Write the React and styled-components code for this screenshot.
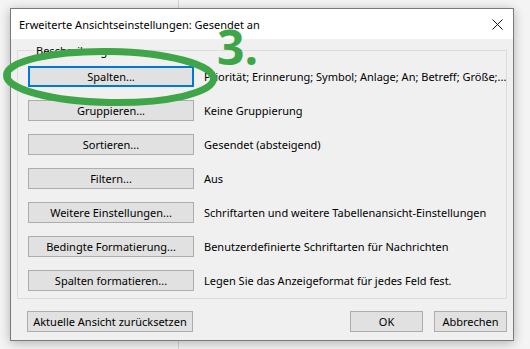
import React from 'react'
import styled, { createGlobalStyle } from 'styled-components'

const GlobalStyle = createGlobalStyle`
  html, body {
    margin: 0;
    padding: 0;
    width: 530px;
    height: 349px;
    overflow: hidden;
  }
  body {
    background: #f4f4f4 linear-gradient(90deg, transparent 178px, #d6d6d6 178px, #d6d6d6 179px, transparent 179px);
    font-family: "Segoe UI", "Noto Sans", sans-serif;
    font-size: 11px;
    color: #000;
  }
`;

const Stage = styled.div`
  padding: 8px 0 0 10px;
`;

const Dialog = styled.div`
  position: relative;
  width: 502px;
  height: 331px;
  border: 1px solid #7a7a7a;
  background: #f0f0f0;
  box-shadow: 0 2px 10px rgba(0, 0, 0, 0.28);
  display: flex;
  flex-direction: column;
`;

const TitleBar = styled.div`
  height: 29px;
  background: #fff;
  display: flex;
  align-items: center;
  justify-content: space-between;
  padding: 1px 8px 0 8px;
`;

const Title = styled.span`
  font-size: 11px;
  line-height: 1;
`;

const Close = styled.svg`
  width: 11px;
  height: 11px;
  margin-right: 2px;
`;

const Body = styled.div`
  flex: 1;
  display: flex;
  flex-direction: column;
  padding: 4px 6px 8px 6px;
`;

const Group = styled.fieldset`
  margin: 0;
  padding: 8px 0 7px 10px;
  border: 1px solid #dcdcdc;
  display: grid;
  grid-template-columns: 166px auto;
  column-gap: 10px;
  row-gap: 13px;
  align-items: center;
`;

const Legend = styled.legend`
  padding: 0 2px;
  margin-left: 6px;
  font-size: 11px;
`;

const Button = styled.div`
  box-sizing: border-box;
  height: 21px;
  width: ${p => p.$w || 166}px;
  background: #e1e1e1;
  border: 1px solid ${p => (p.$focused ? '#0078d7' : '#adadad')};
  box-shadow: ${p => (p.$focused ? 'inset 0 0 0 1px #0078d7' : 'none')};
  display: flex;
  align-items: center;
  justify-content: center;
  font-size: 11px;
  white-space: nowrap;
`;

const Desc = styled.span`
  font-size: 11px;
  white-space: nowrap;
`;

const Footer = styled.div`
  margin-top: auto;
  display: flex;
  align-items: center;
  padding-left: 10px;
  gap: 11px;
`;

const Spacer = styled.div`
  flex: 1;
`;

const Ring = styled.svg`
  position: absolute;
  left: -8px;
  top: 39px;
  width: 214px;
  height: 58px;
  overflow: visible;
  pointer-events: none;
`;

const Step = styled.span`
  position: absolute;
  left: 206px;
  top: 14px;
  font-family: "Open Sans", "Noto Sans", sans-serif;
  font-weight: 700;
  font-size: 48px;
  line-height: 1;
  color: #3ea548;
`;

const rows = [
  ['Spalten...', 'Priorität; Erinnerung; Symbol; Anlage; An; Betreff; Größe;...', true],
  ['Gruppieren...', 'Keine Gruppierung'],
  ['Sortieren...', 'Gesendet (absteigend)'],
  ['Filtern...', 'Aus'],
  ['Weitere Einstellungen...', 'Schriftarten und weitere Tabellenansicht-Einstellungen'],
  ['Bedingte Formatierung...', 'Benutzerdefinierte Schriftarten für Nachrichten'],
  ['Spalten formatieren...', 'Legen Sie das Anzeigeformat für jedes Feld fest.'],
]

export default function App() {
  return (
    <Stage>
      <GlobalStyle />
      <Dialog>
        <TitleBar>
          <Title>Erweiterte Ansichtseinstellungen: Gesendet an</Title>
          <Close viewBox="0 0 11 11">
            <path d="M0.5 0.5 L10.5 10.5 M10.5 0.5 L0.5 10.5" stroke="#111" strokeWidth="1" />
          </Close>
        </TitleBar>
        <Body>
          <Group>
            <Legend>Beschreibung</Legend>
            {rows.map(([label, desc, focused]) => (
              <React.Fragment key={label}>
                <Button $focused={focused}>{label}</Button>
                <Desc>{desc}</Desc>
              </React.Fragment>
            ))}
          </Group>
          <Footer>
            <Button>Aktuelle Ansicht zurücksetzen</Button>
            <Spacer />
            <Button $w={73}>OK</Button>
            <Button $w={73}>Abbrechen</Button>
          </Footer>
        </Body>
        <Ring viewBox="0 0 214 58">
          <ellipse cx="107" cy="29" rx="103.5" ry="25.5" fill="none" stroke="#3ea548" strokeWidth="7" transform="rotate(1 107 29)" />
        </Ring>
        <Step>3.</Step>
      </Dialog>
    </Stage>
  )
}
